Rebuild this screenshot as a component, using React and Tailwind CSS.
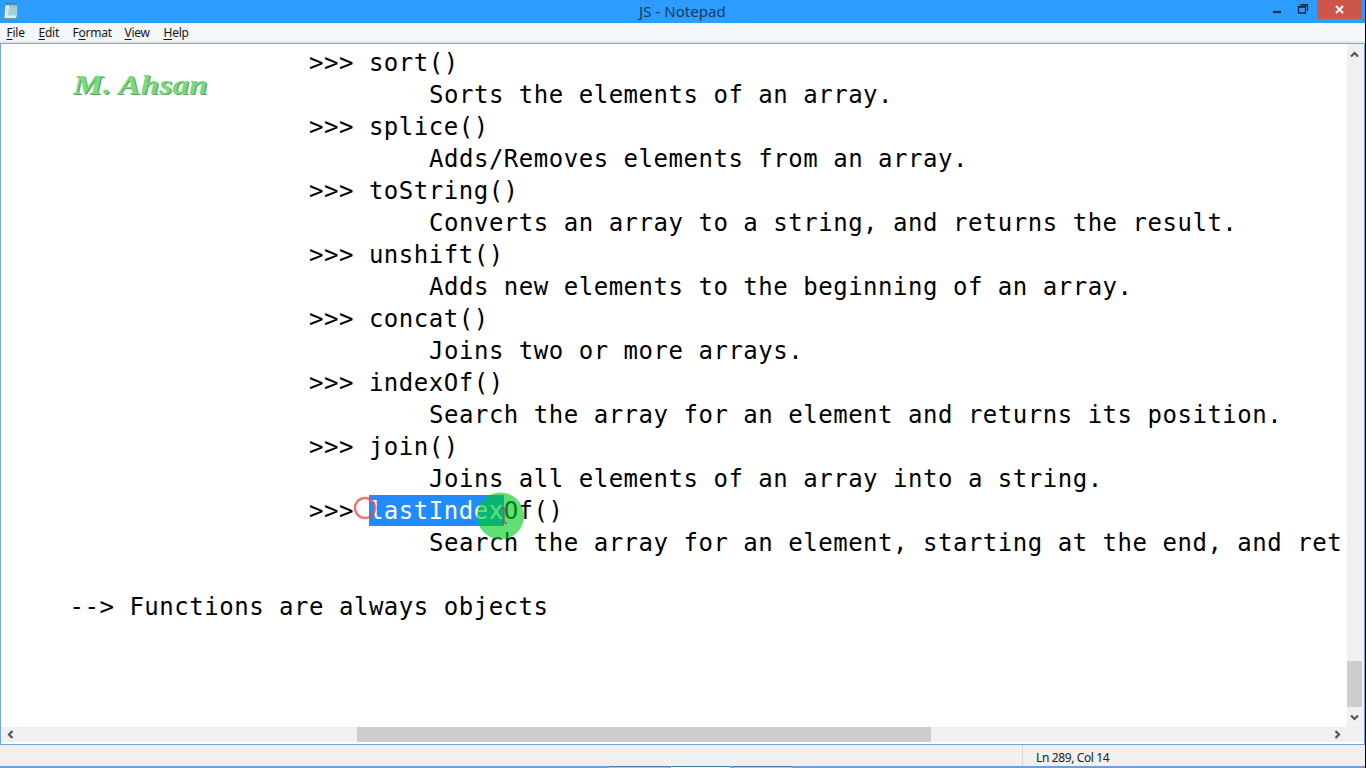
import React from "react";

const LINES = [
  [2, ">>> sort()"],
  [3, "Sorts the elements of an array."],
  [2, ">>> splice()"],
  [3, "Adds/Removes elements from an array."],
  [2, ">>> toString()"],
  [3, "Converts an array to a string, and returns the result."],
  [2, ">>> unshift()"],
  [3, "Adds new elements to the beginning of an array."],
  [2, ">>> concat()"],
  [3, "Joins two or more arrays."],
  [2, ">>> indexOf()"],
  [3, "Search the array for an element and returns its position."],
  [2, ">>> join()"],
  [3, "Joins all elements of an array into a string."],
  [2, ">>> ", "lastIndex", "Of()"],
  [3, "Search the array for an element, starting at the end, and ret"],
  [0, ""],
  [0, "--> Functions are always objects"],
];

const INDENT = { 0: "pl-0", 2: "pl-[239.5px]", 3: "pl-[359.5px]" };

const MENU = [
  ["File", "w-8"],
  ["Edit", "w-[34px]"],
  ["Format", "w-[52px]"],
  ["View", "w-[39px]"],
  ["Help", "w-10"],
];

function NotepadIcon() {
  return (
    <svg width="16" height="18" viewBox="0 0 16 18">
      <path d="M2 2h13v12l-2 3H1z" fill="#6d9ea6" />
      <path d="M2.500 2.500h11.500v11l-1.500 2.500H1.500z" fill="#d9f0f2" />
      <path d="M6.500 2.500H14v11H5z" fill="#9acdd8" />
      <path d="M3 6.500h10M3 8.500h10M3 10.500h10M3 12.500h9" stroke="#b3dce1" strokeWidth=".6" />
      <path d="M3 1v2.500M5 1v2.500M7 1v2.500M9 1v2.500M11 1v2.500M13 1v2.500" stroke="#42565e" strokeWidth=".9" />
    </svg>
  );
}

function Chevron({ d, w, h }) {
  return (
    <svg width={w} height={h} viewBox={`0 0 ${w} ${h}`} fill="none" stroke="#555" strokeWidth="2.200">
      <path d={d} />
    </svg>
  );
}

function TitleBar() {
  return (
    <div className="relative flex h-[23px] shrink-0 items-start bg-[#2c9cff]">
      <div className="pl-[3px] pt-[2px]"><NotepadIcon /></div>
      <div className="absolute left-[639px] top-0 h-[23px] whitespace-nowrap font-['Noto_Sans',sans-serif] text-[15px] leading-[23px] tracking-[0.05px] text-[#123a63]">JS - Notepad</div>
      <div className="ml-auto flex">
        <svg width="53" height="20" viewBox="0 0 53 20" fill="none" stroke="#15293f">
          <path d="M9 12h8" strokeWidth="2.200" />
          <path d="M34.500 6.500h7v6.500h-7z" strokeWidth="1.300" />
          <path d="M34 7h8M36.500 4.700h7v6.300" strokeWidth="1.400" />
        </svg>
        <div className="flex h-[19px] w-[45px] items-center justify-center bg-[#cd5549]">
          <svg width="9" height="9" viewBox="0 0 9 9" stroke="#fff" strokeWidth="1.900"><path d="M1 1l7 7M8 1L1 8" /></svg>
        </div>
        <div className="w-[3px]" />
      </div>
    </div>
  );
}

function MenuBar() {
  return (
    <div className="flex h-5 shrink-0 border-b-2 border-[#dcebf8] bg-[#f5f6f7] pl-[6.5px] font-['Noto_Sans',sans-serif] text-[12px] leading-5 tracking-[-0.25px] text-[#151515]">
      {MENU.map(([name, width]) => (
        <div key={name} className={width}>
          {name === "Format" ? (
            <>F<span className="underline underline-offset-2">o</span>rmat</>
          ) : (
            <><span className="underline underline-offset-2">{name[0]}</span>{name.slice(1)}</>
          )}
        </div>
      ))}
    </div>
  );
}

function TextArea() {
  return (
    <div className="relative min-w-0 flex-1 overflow-hidden bg-white pl-[68.5px] pt-[3px]">
      <div className="font-['DejaVu_Sans_Mono',monospace] text-[24px] leading-8 tracking-[0.52px] text-black">
        {LINES.map(([indent, text, selected, rest], i) => (
          <div key={i} className={`flex h-8 whitespace-pre ${INDENT[indent]}`}>
            <span>{text}</span>
            {selected && <span className="h-[31px] bg-[#218cff] text-white">{selected}</span>}
            {rest && <span>{rest}</span>}
          </div>
        ))}
      </div>
      <div className="absolute left-[72px] top-[25px] origin-left scale-x-[1.24] whitespace-nowrap font-['Liberation_Serif',serif] text-[27px] font-bold italic leading-8 text-[#74dc7c] [text-shadow:1px_1px_0_#6c9c70]">M. Ahsan</div>
      <svg className="absolute left-[350px] top-[440px]" width="190" height="70" viewBox="0 0 190 70" fill="none">
        <circle cx="14" cy="24" r="10" stroke="#f04747" strokeOpacity=".75" strokeWidth="2.600" />
        <circle cx="149.500" cy="32" r="23.500" fill="#00cc20" fillOpacity=".62" />
        <path d="M150 24h1.500l1.500 1 1.500-1h1.500M153 25v13M150 39h1.500l1.500-1 1.500 1h1.500" stroke="#845d5b" strokeWidth="1.300" />
      </svg>
    </div>
  );
}

export default function App() {
  return (
    <div className="flex h-[768px] w-[1366px] overflow-hidden bg-black">
      <div className="flex w-[1365px] flex-col bg-[#f0f0f0]">
        <TitleBar />
        <MenuBar />
        <div className="flex h-[702px] flex-col border border-[#76a5dc] bg-white">
          <div className="flex h-[683px]">
            <TextArea />
            <div className="flex w-[15px] flex-col items-center bg-[#f0f0f0]">
              <div className="flex h-[17px] items-center pt-1"><Chevron w={9} h={7} d="M1 5.500l3.500-3.500L8 5.500" /></div>
              <div className="mt-[600px] h-[46px] w-[15px] bg-[#cdcdcd]" />
              <div className="flex h-5 items-center"><Chevron w={9} h={7} d="M1 1.500L4.500 5 8 1.500" /></div>
            </div>
            <div className="w-[2px] bg-[#f0f0f0]" />
          </div>
          <div className="flex h-[15px] items-center bg-[#f0f0f0]">
            <div className="w-[356px] pl-[6px]"><Chevron w={7} h={9} d="M5.500 1L2 4.500 5.500 8" /></div>
            <div className="h-[15px] w-[574px] bg-[#cdcdcd]" />
            <div className="ml-[403px]"><Chevron w={7} h={9} d="M1.500 1L5 4.500 1.500 8" /></div>
          </div>
        </div>
        <div className="flex h-[21px] bg-[#f0f0f0]">
          <div className="w-[1023px] border-r border-[#d7d7d7]" />
          <div className="pl-[13px] font-['Noto_Sans',sans-serif] text-[12px] leading-[25px] tracking-[-0.38px] text-[#222]">Ln 289, Col 14</div>
        </div>
        <div className="flex h-[2px] bg-[#739fc8] pl-[609px]">
          <div className="h-[2px] w-[60px] border-t border-[#52779b] bg-[#a4c8e8]" />
          <div className="ml-[2px] h-[2px] w-[59px] border-t border-[#52779b] bg-[#f2f8ff]" />
          <div className="ml-[3px] h-[2px] w-[59px] border-t border-[#52779b] bg-[#a4c8e8]" />
        </div>
      </div>
      <div className="w-px bg-black" />
    </div>
  );
}
